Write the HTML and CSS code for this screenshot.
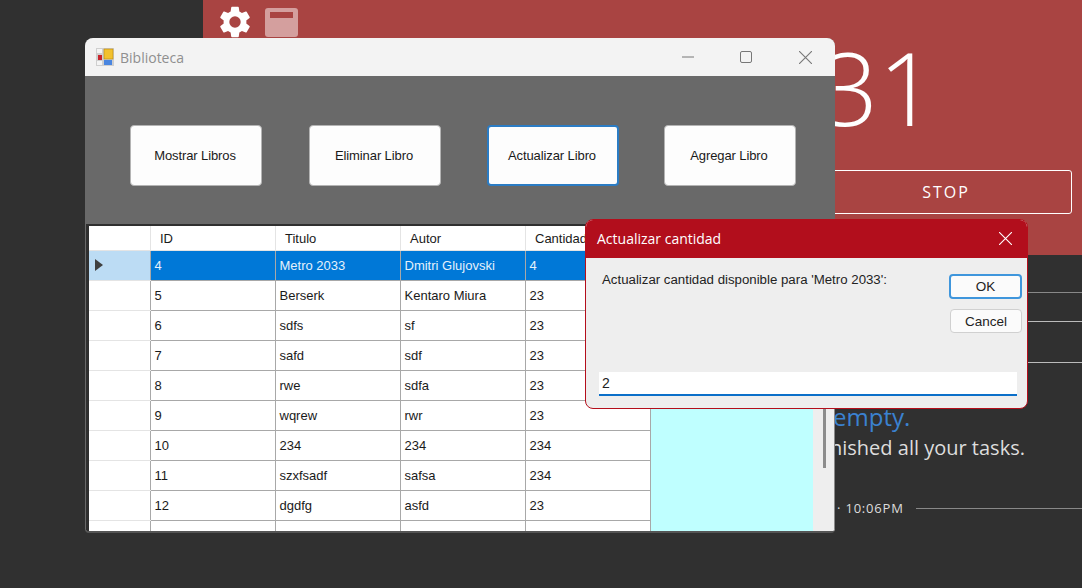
FILE: index.html
```html
<!DOCTYPE html>
<html lang="en">
<head>
    <meta charset="UTF-8">
    <title>Biblioteca</title>
    <link rel="stylesheet" href="styles.css">
</head>
<body>
    <!-- app behind the windows -->
    <div class="timer-app">
        <div class="timer-panel">
            <div class="timer-tools">
                <svg class="gear-icon" viewBox="0 0 24 24"><path d="M19.14 12.94c.04-.3.06-.61.06-.94s-.02-.64-.07-.94l2.03-1.58a.49.49 0 0 0 .12-.61l-1.92-3.32a.49.49 0 0 0-.59-.22l-2.39.96a7 7 0 0 0-1.62-.94l-.36-2.54a.48.48 0 0 0-.48-.41h-3.84a.48.48 0 0 0-.47.41l-.36 2.54c-.59.24-1.13.57-1.62.94l-2.39-.96a.49.49 0 0 0-.59.22L2.74 8.87a.48.48 0 0 0 .12.61l2.03 1.58c-.05.3-.09.63-.09.94s.02.64.07.94l-2.03 1.58a.49.49 0 0 0-.12.61l1.92 3.32c.12.22.37.29.59.22l2.39-.96c.5.38 1.03.7 1.62.94l.36 2.54c.05.24.24.41.48.41h3.84c.24 0 .44-.17.47-.41l.36-2.54c.59-.24 1.13-.56 1.62-.94l2.39.96c.22.08.47 0 .59-.22l1.92-3.32a.48.48 0 0 0-.12-.61zM12 15.6A3.6 3.6 0 1 1 12 8.4a3.6 3.6 0 0 1 0 7.2z"/></svg>
                <div class="mini-icon"><span></span></div>
            </div>
            <div class="timer-count">31</div>
            <div class="stop-btn">STOP</div>
        </div>
        <div class="task-lines">
            <div class="task-line line-dim"></div>
            <div class="task-line"></div>
            <div class="task-line"></div>
        </div>
        <div class="empty-block">
            <div class="empty-title">empty.</div>
            <div class="empty-sub">nished all your tasks.</div>
        </div>
        <div class="time-row">
            <span>· 10:06PM</span>
            <div class="time-rule"></div>
        </div>
    </div>

    <!-- main window -->
    <div class="window lib-window">
        <div class="titlebar">
            <svg class="app-icon" viewBox="0 0 18 18">
                <rect width="18" height="18" fill="#cfcfcf"/>
                <rect x="1" y="1" width="5" height="4" fill="#f4f4f4"/>
                <rect x="1" y="13" width="5" height="4" fill="#f4f4f4"/>
                <rect x="2" y="7" width="4" height="5" fill="#c8242c"/>
                <rect x="8" y="1" width="9" height="10" fill="#f2c12e" stroke="#b8860b" stroke-width=".6"/>
                <rect x="8" y="12" width="8" height="5" fill="#4a86e0"/>
            </svg>
            <span class="title-text">Biblioteca</span>
            <div class="win-controls">
                <svg viewBox="0 0 12 12"><path d="M0 6h12" stroke="#777" fill="none"/></svg>
                <svg viewBox="0 0 12 12"><rect x=".5" y=".5" width="11" height="11" rx="1.5" stroke="#777" fill="none"/></svg>
                <svg viewBox="0 0 12 12"><path d="M0 0l12 12M12 0L0 12" stroke="#777" fill="none"/></svg>
            </div>
        </div>
        <div class="toolbar">
            <button class="tool-btn">Mostrar Libros</button>
            <button class="tool-btn">Eliminar Libro</button>
            <button class="tool-btn focused">Actualizar Libro</button>
            <button class="tool-btn">Agregar Libro</button>
        </div>
        <div class="grid-area">
            <div class="grid-wrap">
                <table class="book-grid">
                    <thead>
                        <tr><th class="row-head"></th><th>ID</th><th>Titulo</th><th>Autor</th><th>Cantidad</th></tr>
                    </thead>
                    <tbody>
                        <tr class="selected"><td class="row-head"><i class="row-arrow"></i></td><td>4</td><td>Metro 2033</td><td>Dmitri Glujovski</td><td>4</td></tr>
                        <tr><td class="row-head"></td><td>5</td><td>Berserk</td><td>Kentaro Miura</td><td>23</td></tr>
                        <tr><td class="row-head"></td><td>6</td><td>sdfs</td><td>sf</td><td>23</td></tr>
                        <tr><td class="row-head"></td><td>7</td><td>safd</td><td>sdf</td><td>23</td></tr>
                        <tr><td class="row-head"></td><td>8</td><td>rwe</td><td>sdfa</td><td>23</td></tr>
                        <tr><td class="row-head"></td><td>9</td><td>wqrew</td><td>rwr</td><td>23</td></tr>
                        <tr><td class="row-head"></td><td>10</td><td>234</td><td>234</td><td>234</td></tr>
                        <tr><td class="row-head"></td><td>11</td><td>szxfsadf</td><td>safsa</td><td>234</td></tr>
                        <tr><td class="row-head"></td><td>12</td><td>dgdfg</td><td>asfd</td><td>23</td></tr>
                        <tr><td class="row-head"></td><td>13</td><td>asdfg</td><td>asdfg</td><td>125</td></tr>
                    </tbody>
                </table>
            </div>
            <div class="grid-scroll"><div class="scroll-thumb"></div></div>
        </div>
    </div>

    <!-- input dialog -->
    <div class="window dialog">
        <div class="dialog-title">
            <span>Actualizar cantidad</span>
            <svg viewBox="0 0 12 12"><path d="M0 0l12 12M12 0L0 12" stroke="#fff" fill="none"/></svg>
        </div>
        <div class="dialog-body">
            <div class="dialog-top">
                <p class="dialog-msg">Actualizar cantidad disponible para 'Metro 2033':</p>
                <div class="dialog-btns">
                    <button class="dlg-btn default">OK</button>
                    <button class="dlg-btn">Cancel</button>
                </div>
            </div>
            <div class="dialog-input">2</div>
        </div>
    </div>
</body>
</html>
```

FILE: styles.css
```css
html, body {
    margin: 0;
    height: 100%;
}
body {
    position: relative;
    width: 1082px;
    height: 588px;
    overflow: hidden;
    background-color: #303030;
    font-family: "Liberation Sans", Arial, sans-serif;
}

/* background timer app */
.timer-app {
    margin-left: 203px;
    font-family: "Open Sans", sans-serif;
}
.timer-panel {
    height: 255px;
    box-sizing: border-box;
    padding: 5px 10px 0 617px;
    position: relative;
    background-color: #a94442;
    color: #fff;
}
.timer-tools {
    position: absolute;
    left: 16px;
    top: 3px;
    display: flex;
    align-items: center;
    gap: 14px;
}
.gear-icon {
    width: 38px;
    height: 38px;
    margin: 0 -3px;
    fill: #fff;
}
.mini-icon {
    width: 33px;
    height: 29px;
    box-sizing: border-box;
    padding: 4px 5px;
    border-radius: 3px;
    background-color: #d49f9e;
}
.mini-icon span {
    display: block;
    height: 6px;
    background-color: #a94442;
}
.timer-count {
    height: 165px;
    box-sizing: border-box;
    padding-right: 152px;
    text-align: right;
    font-size: 102px;
    font-weight: 300;
    line-height: 163px;
}
.stop-btn {
    height: 44px;
    box-sizing: border-box;
    border: 1px solid #fff;
    border-radius: 3px;
    text-align: center;
    font-size: 16px;
    letter-spacing: 2px;
    line-height: 42px;
}
.task-lines {
    padding: 37px 0 0 617px;
}
.task-line {
    height: 1px;
    margin-bottom: 28px;
    background-color: #bbb;
}
.task-line:nth-child(2) {
    margin-bottom: 40px;
}
.task-line:last-child {
    margin-bottom: 0;
}
.task-line.line-dim {
    background-color: #888;
}
.empty-block {
    padding-left: 630px;
    margin-top: 38px;
}
.empty-title {
    color: #3b82d0;
    font-size: 24px;
    line-height: 32px;
}
.empty-sub {
    margin-left: -3px;
    color: #ddd;
    font-size: 20px;
    line-height: 30px;
}
.time-row {
    display: flex;
    align-items: center;
    gap: 12px;
    margin-top: 36px;
    padding-left: 634px;
    color: #ddd;
    font-size: 13px;
    letter-spacing: .8px;
    line-height: 18px;
}
.time-rule {
    flex: 1;
    height: 1px;
    background-color: #888;
}

/* windows */
.window {
    position: absolute;
    box-sizing: border-box;
    overflow: hidden;
}
.lib-window {
    left: 85px;
    top: 38px;
    width: 750px;
    height: 495px;
    border-bottom: 2px solid #555;
    border-radius: 8px 8px 4px 4px;
    background-color: #696969;
}
.titlebar {
    display: flex;
    align-items: center;
    height: 38px;
    padding-left: 11px;
    background-color: #f3f3f3;
}
.app-icon {
    width: 18px;
    height: 18px;
    margin-right: 6px;
}
.title-text {
    font-family: "Open Sans", sans-serif;
    font-size: 14px;
    color: #8f8f8f;
}
.win-controls {
    display: flex;
    gap: 47px;
    margin-left: auto;
    padding-right: 23px;
}
.win-controls svg {
    width: 12px;
    height: 12px;
}
.win-controls svg:first-child {
    margin-right: -1px;
}
.win-controls svg:last-child {
    width: 13px;
    height: 13px;
}
.toolbar {
    display: flex;
    height: 148px;
    box-sizing: border-box;
    padding: 49px 0 0 45px;
    gap: 47px;
}
.tool-btn {
    width: 132px;
    height: 61px;
    padding: 0 2px 0 0;
    border: 1px solid #b4b4b4;
    border-radius: 4px;
    background-color: #fdfdfd;
    color: #1a1a1a;
    font-family: "Liberation Sans", Arial, sans-serif;
    font-size: 13px;
    letter-spacing: -.1px;
}
.tool-btn.focused {
    margin-left: -1px;
    border: 2px solid #2b7cc4;
}
.tool-btn:nth-child(4) {
    margin-left: -2px;
}

/* data grid */
.grid-area {
    display: flex;
    height: 307px;
    margin-left: 1px;
    border-top: 2px solid #2f2f2f;
    border-left: 3px solid #2f2f2f;
    box-sizing: border-box;
    background-color: #eee;
}
.grid-wrap {
    width: 724px;
    overflow: hidden;
    background-color: #bfffff;
}
.book-grid {
    width: 561px;
    table-layout: fixed;
    border-collapse: collapse;
    background-color: #fff;
    font-size: 13px;
    color: #1a1a1a;
}
.book-grid th {
    width: 125px;
    height: 24px;
    box-sizing: border-box;
    padding: 1px 0 0 9.5px;
    border-right: 1px solid #e4e4e4;
    border-bottom: 1px solid #e4e4e4;
    font-weight: 400;
    text-align: left;
    white-space: nowrap;
}
.book-grid th.row-head,
.book-grid td.row-head {
    width: 61px;
    padding: 0;
    border-bottom-color: #e4e4e4;
}
.book-grid td {
    height: 30px;
    box-sizing: border-box;
    padding: 1px 0 0 4px;
    border-right: 1px solid #a8a8a8;
    border-bottom: 1px solid #a8a8a8;
    white-space: nowrap;
}
.selected td {
    background-color: #0078d7;
    color: #e4f1fb;
}
.selected td.row-head {
    background-color: #bcdcf4;
}
.row-arrow {
    display: block;
    width: 0;
    height: 0;
    margin-left: 6px;
    border-top: 6px solid transparent;
    border-bottom: 6px solid transparent;
    border-left: 8px solid #404040;
}
.grid-scroll {
    flex: 1;
    position: relative;
    border-right: 1px solid #8a8a8a;
}
.scroll-thumb {
    position: absolute;
    left: 10px;
    bottom: 63px;
    width: 3px;
    height: 120px;
    background-color: #8c8c8c;
}

/* input dialog */
.dialog {
    left: 585px;
    top: 219px;
    width: 443px;
    height: 190px;
    border: 1px solid #b40e1b;
    border-radius: 8px;
    background-color: #eeeeee;
}
.dialog-title {
    display: flex;
    align-items: center;
    justify-content: space-between;
    height: 38px;
    box-sizing: border-box;
    padding: 0 15px 2px 11px;
    background-color: #b20e1c;
    color: #fff;
    font-family: "Open Sans", sans-serif;
    font-size: 14px;
}
.dialog-title svg {
    width: 13px;
    height: 13px;
}
.dialog-body {
    padding: 15px 10px 0 16px;
}
.dialog-top {
    display: flex;
    justify-content: space-between;
    height: 99px;
}
.dialog-msg {
    margin: -1px 0 0;
    font-size: 13.25px;
    line-height: 15px;
    color: #222;
}
.dialog-btns {
    display: flex;
    flex-direction: column;
    gap: 10px;
    margin: 1px -5px 0 0;
}
.dlg-btn {
    width: 72px;
    height: 24px;
    padding: 0;
    border: 1px solid #d0d0d0;
    border-radius: 4px;
    background-color: #fbfbfb;
    color: #222;
    font-family: "Liberation Sans", Arial, sans-serif;
    font-size: 13.5px;
}
.dlg-btn.default {
    width: 73px;
    height: 25px;
    margin-left: -1px;
    border: 2px solid #3f96dc;
}
.dialog-input {
    width: 418px;
    height: 24px;
    margin-left: -3px;
    box-sizing: border-box;
    padding: 2px 0 0 3px;
    border-bottom: 2px solid #0b6fc9;
    background-color: #fff;
    color: #222;
    font-size: 14px;
    line-height: 18px;
}
```
